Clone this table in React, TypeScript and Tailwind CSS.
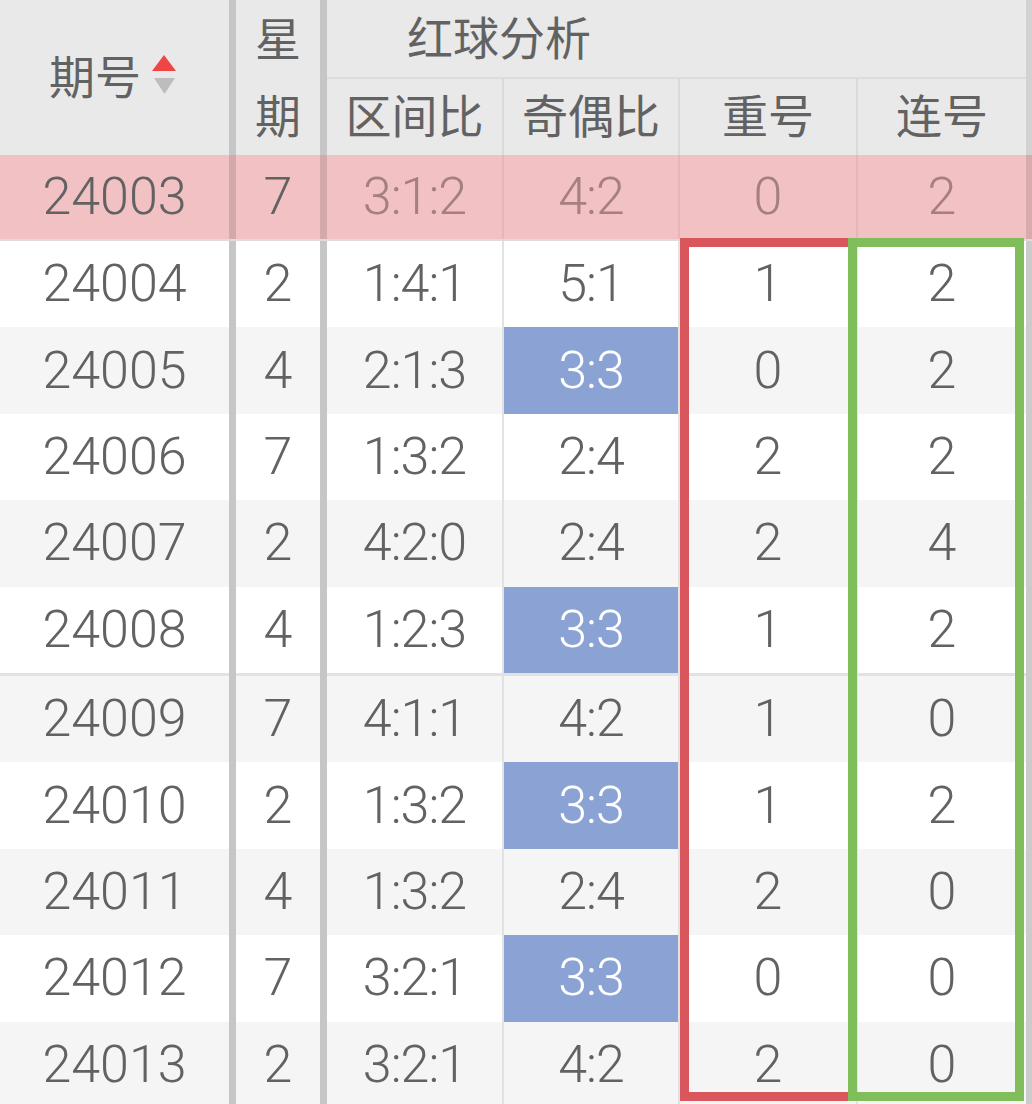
import { Fragment, type ReactNode } from 'react'
import { clsx } from 'clsx'

type Cell = { text?: ReactNode; cls?: string }

const COLS = ['w-[229px]', 'w-[84px]', 'w-[175px]', 'w-[174px]', 'w-[176px]', 'w-[168px]']
const SEPS = ['w-[7px]', 'w-[7px]', 'w-[2px]', 'w-[2px]', 'w-[2px]']

const rows = [
  ['24004', '2', '1:4:1', '5:1', '1', '2'],
  ['24005', '4', '2:1:3', '3:3', '0', '2'],
  ['24006', '7', '1:3:2', '2:4', '2', '2'],
  ['24007', '2', '4:2:0', '2:4', '2', '4'],
  ['24008', '4', '1:2:3', '3:3', '1', '2'],
  ['24009', '7', '4:1:1', '4:2', '1', '0'],
  ['24010', '2', '1:3:2', '3:3', '1', '2'],
  ['24011', '4', '1:3:2', '2:4', '2', '0'],
  ['24012', '7', '3:2:1', '3:3', '0', '0'],
  ['24013', '2', '3:2:1', '4:2', '2', '0'],
]

function Row({
  height,
  cells,
  className,
  thick = 'bg-[#c6c6c6]',
  thin = 'bg-[#e2e2e2]',
  strip = 'bg-[#cbcbcb]',
}: {
  height: string
  cells: Cell[]
  className?: string
  thick?: string
  thin?: string
  strip?: string
}) {
  return (
    <div className={clsx('flex', height, className)}>
      {cells.map((cell, i) => (
        <Fragment key={i}>
          <div
            className={clsx(
              'flex shrink-0 items-center justify-center',
              COLS[i],
              i === 2 || i === 3 ? 'tracking-[-1px]' : undefined,
              cell.cls
            )}
          >
            {cell.text}
          </div>
          {i < 5 && <div className={clsx('h-full shrink-0', SEPS[i], i < 2 ? thick : thin)} />}
        </Fragment>
      ))}
      <div className={clsx('h-full w-[6px] shrink-0', strip)} />
    </div>
  )
}

function SortIcon() {
  return (
    <svg width="24" height="40" viewBox="0 0 24 40" className="mt-[-5px]">
      <polygon points="12,0 24,16 0,16" fill="#ef4545" />
      <polygon points="2,23 23,23 12.5,39" fill="#bdbdbd" />
    </svg>
  )
}

export default function App() {
  return (
    <div className="relative h-[1104px] w-[1032px] overflow-hidden bg-white font-[Roboto,'Noto_Sans_CJK_SC',sans-serif] text-[#626262]">
      {/* Header */}
      <div className="flex h-[155px] bg-[#e9e9e9] text-[46px] leading-none">
        <div className="flex w-[229px] shrink-0 items-center justify-center gap-[11px] pr-[4px]">
          <span>期号</span>
          <SortIcon />
        </div>
        <div className="w-[7px] shrink-0 bg-[#c6c6c6]" />
        <div className="flex w-[84px] shrink-0 flex-col">
          <div className="flex h-[79px] items-center justify-center">星</div>
          <div className="flex h-[76px] items-center justify-center">期</div>
        </div>
        <div className="w-[7px] shrink-0 bg-[#c6c6c6]" />
        <div className="flex w-[699px] shrink-0 flex-col">
          <div className="flex h-[77px] items-center pl-[80px]">红球分析</div>
          <div className="h-[2px] bg-[#dcdcdc]" />
          <div className="flex h-[76px]">
            <div className="flex w-[175px] items-center justify-center">区间比</div>
            <div className="w-[2px] bg-[#dadada]" />
            <div className="flex w-[174px] items-center justify-center">奇偶比</div>
            <div className="w-[2px] bg-[#dadada]" />
            <div className="flex w-[176px] items-center justify-center">重号</div>
            <div className="w-[2px] bg-[#dadada]" />
            <div className="flex w-[168px] items-center justify-center">连号</div>
          </div>
        </div>
        <div className="w-[6px] shrink-0 bg-[#d2d2d2]" />
      </div>

      {/* Highlighted row */}
      <Row
        height="h-[84px]"
        className="bg-[#f1c1c3] text-[52px] font-light"
        thick="bg-[#d4a9ab]"
        thin="bg-[#e7b6b8]"
        strip="bg-[#d8abad]"
        cells={[
          { text: '24003' },
          { text: '7' },
          { text: '3:1:2', cls: 'text-[#a57f81]' },
          { text: '4:2', cls: 'text-[#a57f81]' },
          { text: '0', cls: 'text-[#a57f81]' },
          { text: '2', cls: 'text-[#a57f81]' },
        ]}
      />
      <div className="h-[2px] bg-[#e2dada]" />

      {/* Body */}
      {rows.map((r, i) => (
        <Fragment key={r[0]}>
          <Row
            height="h-[86.4px]"
            className={clsx('text-[52px] font-light', i % 2 ? 'bg-[#f5f5f5]' : 'bg-white')}
            cells={r.map((v, j) => ({
              text: v,
              cls: j === 3 && v === '3:3' ? 'h-full bg-[#8aa3d4] text-white' : undefined,
            }))}
          />
          {i === 4 && (
            <Row height="h-[3px]" className="bg-[#e2e2e2]" cells={[{}, {}, {}, {}, {}, {}]} />
          )}
        </Fragment>
      ))}

      {/* Annotation boxes */}
      <div className="absolute left-[680px] top-[238px] h-[863px] w-[177px] border-[9px] border-[#d9565c]" />
      <div className="absolute left-[848px] top-[238px] h-[863px] w-[176px] border-[9px] border-[#80bd5b]" />
    </div>
  )
}
